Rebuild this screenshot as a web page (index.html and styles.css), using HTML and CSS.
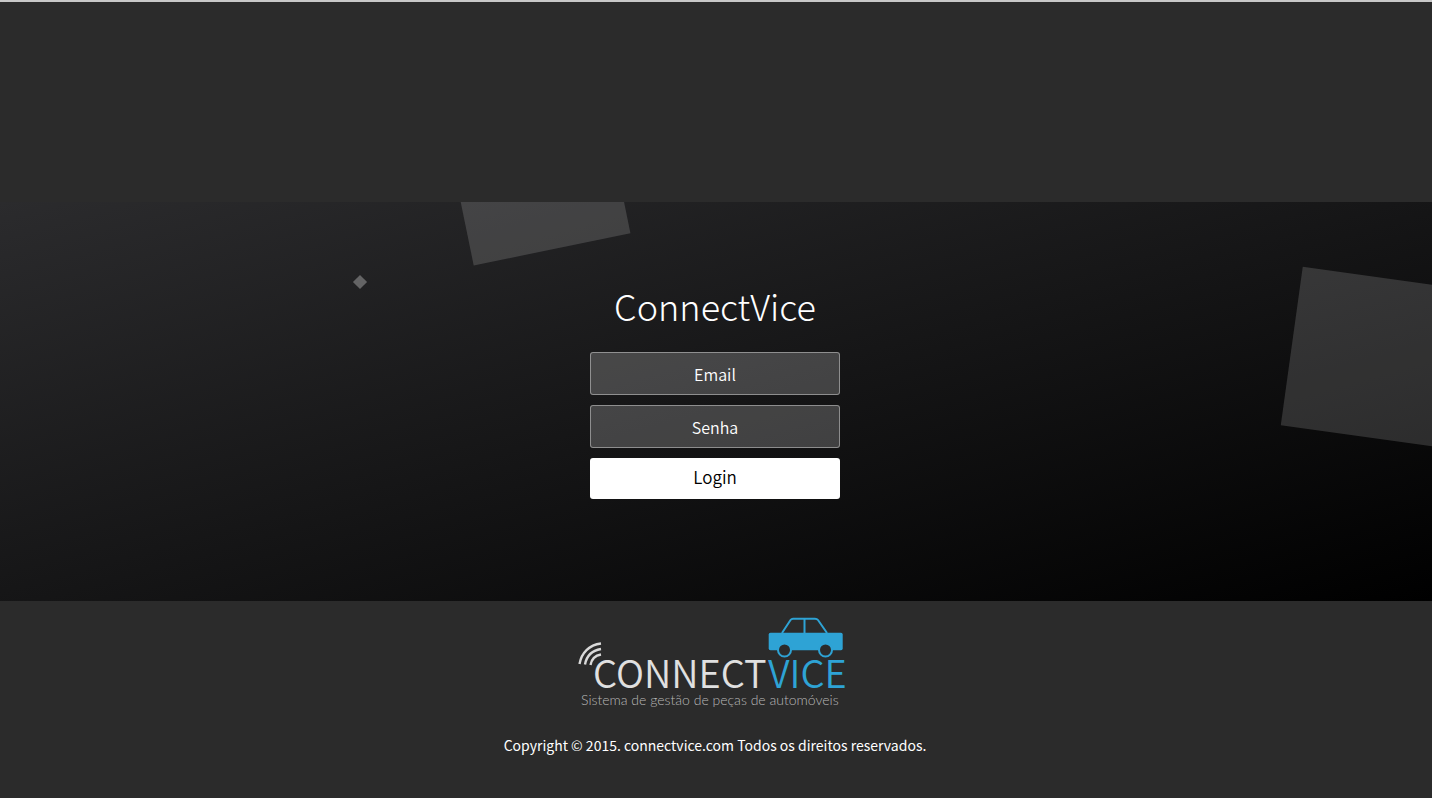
FILE: index.html
```html
<!DOCTYPE html>
<html lang="pt-BR">
<head>
<meta charset="utf-8">
<title>ConnectVice</title>
<link rel="stylesheet" href="styles.css">
</head>
<body>
<main class="hero">
  <div class="shape shape-top"></div>
  <div class="shape shape-dot"></div>
  <div class="shape shape-right"></div>
  <h1 class="title">ConnectVice</h1>
  <form class="login">
    <input class="field" type="text" placeholder="Email" aria-label="Email">
    <input class="field" type="password" placeholder="Senha" aria-label="Senha">
    <button class="submit" type="submit">Login</button>
  </form>
</main>
<footer class="footer">
  <svg class="logo" width="270" height="96" viewBox="0 0 270 96" role="img" aria-label="ConnectVice">
    <g class="waves" stroke-width="2.4">
      <path d="M2.500 49C4.500 38 12 30 24 28.500"/>
      <path d="M8 49.500C9.500 41 15 35.500 24 34"/>
      <path d="M13.500 50C14.500 44.500 18 40.500 24 39.500"/>
    </g>
    <g class="car">
      <path class="car-line" d="M205 18L213.500 5Q214.500 3.700 216 3.700H238Q240 3.700 241 5L250 18M227.500 4V18"/>
      <path class="car-body" d="M193.500 17.700H264Q265.700 17.700 265.700 19.500V33.500Q265.700 35.300 264 35.300H193.500Q191.700 35.300 191.700 33.500V19.500Q191.700 17.700 193.500 17.700Z"/>
      <circle class="car-wheel" cx="207.500" cy="35" r="6.500"/>
      <circle class="car-wheel" cx="248.500" cy="35" r="6.500"/>
    </g>
    <text class="word" x="16" y="73">CONNECT<tspan class="word-blue" x="191">VICE</tspan></text>
    <text class="tagline" x="4" y="90">Sistema de gestão de peças de automóveis</text>
  </svg>
  <p class="copyright">Copyright © 2015. connectvice.com Todos os direitos reservados.</p>
</footer>
</body>
</html>
```
FILE: styles.css
```css
* { box-sizing: border-box; }

body {
  margin: 0;
  min-height: 100vh;
  padding-top: 200px;
  border-top: 2px solid #c8c8c8;
  background: #2b2b2b;
  color: #fff;
  font-family: "Noto Sans CJK JP", "Open Sans", sans-serif;
}

.hero {
  position: relative;
  overflow: hidden;
  padding: 78px 2px 102px 0;
  background: linear-gradient(to bottom right, #2b2b2d 0%, #000 100%);
  text-align: center;
}

.shape {
  position: absolute;
  width: 160px;
  height: 160px;
  background: rgba(255, 255, 255, 0.15);
}

.shape-top { left: 456px; top: -111px; transform: rotate(-11.6deg); }
.shape-right { right: -19px; top: 75px; transform: rotate(7.9deg); }
.shape-dot { left: 355px; top: 75px; width: 10px; height: 10px; transform: rotate(45deg); background: rgba(255, 255, 255, 0.3); }

.title {
  position: relative;
  margin: 0 0 22px;
  font-size: 36px;
  font-weight: 300;
  line-height: 50px;
}

.login {
  position: relative;
  display: flex;
  flex-direction: column;
  gap: 10px;
  width: 250px;
  margin: 0 auto;
}

.field, .submit {
  margin: 0;
  padding: 0 15px;
  border-radius: 3px;
  font: 350 16px "Noto Sans CJK JP", "Open Sans", sans-serif;
  text-align: center;
}

.field {
  height: 43px;
  border: 1px solid rgba(255, 255, 255, 0.4);
  background: rgba(255, 255, 255, 0.2);
  color: #fff;
}

.field::placeholder { color: #fff; opacity: 1; }

.submit {
  height: 41px;
  padding-bottom: 4px;
  border: 0;
  background: #fff;
  color: #000;
  font-size: 17px;
}

.footer {
  display: flex;
  flex-direction: column;
  align-items: center;
  padding: 14px 2px 0 0;
}

.logo { display: block; margin-right: 6px; }
.waves { fill: none; stroke: #d9d9d9; }
.car-line { fill: none; stroke: #2ea3d5; stroke-width: 2px; }
.car-body { fill: #2ea3d5; }
.car-wheel { fill: #2b2b2b; stroke: #2ea3d5; stroke-width: 2px; }
.word { font: 350 38px "Noto Sans CJK JP", "Open Sans", sans-serif; fill: #e0e0e0; }
.word-blue { fill: #2ea3d5; }
.tagline { font: 300 14px Lato, "Open Sans", sans-serif; fill: #b8b8b8; }

.copyright {
  margin: 24px 0 0;
  font-size: 14px;
  font-weight: 400;
  line-height: 20px;
}
```
